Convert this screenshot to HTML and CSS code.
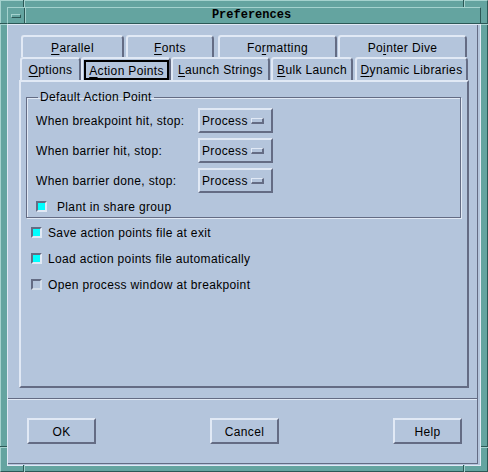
FILE: index.html
```html
<!DOCTYPE html>
<html>
<head>
<meta charset="utf-8">
<link rel="stylesheet" href="styles.css">
</head>
<body>
<div class="window">
  <span class="mark v tl"></span>
  <span class="mark v tr"></span>
  <span class="mark v bl"></span>
  <span class="mark v br"></span>
  <span class="mark h lt"></span>
  <span class="mark h rt"></span>
  <span class="mark h lb"></span>
  <span class="mark h rb"></span>
  <div class="titlebar">
    <div class="menubtn"><span class="menuicon"></span></div>
    <div class="title">Preferences</div>
  </div>
  <div class="client">
    <div class="dialog">
      <div class="notebook">
        <div class="tabrow back">
          <div class="tab t-parallel"><u>P</u>arallel</div>
          <div class="tab t-fonts"><u>F</u>onts</div>
          <div class="tab t-formatting">Fo<u>r</u>matting</div>
          <div class="tab t-pointer">Po<u>i</u>nter Dive</div>
        </div>
        <div class="tabrow front">
          <div class="tab t-options"><u>O</u>ptions</div>
          <div class="tab t-action sel"><div class="focus"><u>A</u>ction Points</div></div>
          <div class="tab t-launch"><u>L</u>aunch Strings</div>
          <div class="tab t-bulk"><u>B</u>ulk Launch</div>
          <div class="tab t-dynamic"><u>D</u>ynamic Libraries</div>
        </div>
        <div class="panel">
          <fieldset class="group">
            <legend>Default Action Point</legend>
            <div class="rows">
              <div class="row">
                <span class="label">When breakpoint hit, stop:</span>
                <div class="option"><span>Process</span><span class="indicator"></span></div>
              </div>
              <div class="row">
                <span class="label">When barrier hit, stop:</span>
                <div class="option"><span>Process</span><span class="indicator"></span></div>
              </div>
              <div class="row">
                <span class="label">When barrier done, stop:</span>
                <div class="option"><span>Process</span><span class="indicator"></span></div>
              </div>
            </div>
            <div class="check plant"><span class="box on"></span><span>Plant in share group</span></div>
          </fieldset>
          <div class="checks">
            <div class="check"><span class="box on"></span><span>Save action points file at exit</span></div>
            <div class="check"><span class="box on"></span><span>Load action points file automatically</span></div>
            <div class="check"><span class="box off"></span><span>Open process window at breakpoint</span></div>
          </div>
        </div>
      </div>
      <div class="sep"></div>
      <div class="buttons">
        <div class="btn">OK</div>
        <div class="btn">Cancel</div>
        <div class="btn">Help</div>
      </div>
    </div>
  </div>
</div>
</body>
</html>
```
FILE: styles.css
```css
* { box-sizing: border-box; }
html, body { margin: 0; padding: 0; }
body {
  width: 488px;
  height: 472px;
  background: #64a4a0;
  font-family: "Liberation Sans", Arial, sans-serif;
  font-size: 12px;
  letter-spacing: 0.35px;
  color: #000;
}
u { text-decoration: underline; text-underline-offset: 2px; text-decoration-thickness: 1px; }

.window {
  position: relative;
  width: 488px;
  height: 472px;
  background: #64a4a0;
  border-top: 1px solid #a4d2ce;
  border-left: 1px solid #a4d2ce;
  border-right: 1px solid #2c5856;
  border-bottom: 1px solid #2c5856;
  padding: 6px 6px 5px 6px;
  display: flex;
  flex-direction: column;
}

.mark { position: absolute; }
.mark.v { width: 2px; height: 7px; border-left: 1px solid #2c5856; border-right: 1px solid #a4d2ce; }
.mark.h { height: 2px; width: 7px; border-top: 1px solid #2c5856; border-bottom: 1px solid #a4d2ce; }
.mark.tl { left: 22px; top: -1px; }
.mark.tr { left: 462px; top: -1px; }
.mark.bl { left: 22px; bottom: -1px; }
.mark.br { left: 462px; bottom: -1px; }
.mark.lt { left: -1px; top: 22px; }
.mark.rt { right: -1px; top: 22px; }
.mark.lb { left: -1px; top: 445px; }
.mark.rb { right: -1px; top: 445px; }

.titlebar {
  height: 17px;
  display: flex;
  border-top: 1px solid #a4d2ce;
  border-left: 1px solid #a4d2ce;
  border-bottom: 1px solid #2c5856;
  border-right: 1px solid #2c5856;
}
.menubtn {
  width: 17px;
  display: flex;
  align-items: center;
  justify-content: center;
  border-right: 1px solid #2c5856;
  box-shadow: 1px 0 0 #a4d2ce;
}
.menuicon {
  width: 10px;
  height: 4px;
  border-top: 1px solid #a4d2ce;
  border-left: 1px solid #a4d2ce;
  border-bottom: 1px solid #2c5856;
  border-right: 1px solid #2c5856;
}
.title {
  flex: 1;
  text-align: center;
  font-family: "Liberation Mono", "Courier New", monospace;
  font-weight: bold;
  font-size: 12px;
  letter-spacing: 0;
  line-height: 15px;
  padding-right: 2px;
}

.client {
  flex: 1;
  background: #b4c5dc;
  border: 1px solid #e1e9f5;
  display: flex;
  flex-direction: column;
}
.dialog {
  flex: 1;
  margin: 0 2px 1px 0;
  border-right: 1px solid #646c84;
  border-bottom: 1px solid #646c84;
  display: flex;
  flex-direction: column;
}

.notebook {
  margin: 10px 0 0 11px;
  width: 450px;
}
.tabrow { display: flex; }
.tabrow.back { height: 22px; padding-left: 2px; }
.tabrow.front { height: 23px; padding-left: 1px; }
.tab {
  border-top: 2px solid #e1e9f5;
  border-left: 2px solid #e1e9f5;
  border-right: 2px solid #646c84;
  border-radius: 3px 4px 0 0;
  display: flex;
  align-items: center;
  justify-content: center;
  padding-top: 1px;
  white-space: nowrap;
}
.t-parallel { width: 103px; }
.t-fonts { width: 88px; margin-left: 2px; }
.t-formatting { width: 119px; margin-left: 4px; }
.t-pointer { width: 129px; margin-left: 1px; }
.t-options { width: 61px; }
.t-action { width: 90px; }
.t-launch { width: 99px; }
.t-bulk { width: 82px; margin-left: 1px; }
.t-dynamic { width: 113px; margin-left: 2px; }
.tab.sel {
  padding: 1px 0 0 1px;
  align-items: stretch;
}
.focus {
  flex: 1;
  border: 2px solid #000;
  display: flex;
  align-items: center;
  justify-content: center;
  padding-top: 1px;
}

.panel {
  height: 308px;
  border-top: 2px solid #e1e9f5;
  border-left: 2px solid #e1e9f5;
  border-right: 2px solid #646c84;
  border-bottom: 2px solid #646c84;
  padding: 8px 0 0 5px;
}

.group {
  margin: 0;
  width: 435px;
  border: 1px solid #646c84;
  box-shadow: inset 1px 1px 0 #e1e9f5, 1px 1px 0 #e1e9f5;
  padding: 4px 0 5px 9px;
}
.group legend {
  margin-left: 2px;
  padding: 0 2px;
  line-height: 14px;
}
.rows {
  display: flex;
  flex-direction: column;
  gap: 5px;
}
.row {
  display: flex;
  align-items: center;
  height: 25px;
}
.label { width: 162px; padding-top: 1px; }
.option {
  width: 75px;
  height: 25px;
  border-top: 2px solid #e1e9f5;
  border-left: 2px solid #e1e9f5;
  border-right: 2px solid #646c84;
  border-bottom: 2px solid #646c84;
  display: flex;
  align-items: center;
  justify-content: space-between;
  padding: 1px 7px 0 2px;
}
.indicator {
  width: 13px;
  height: 6px;
  border-top: 1px solid #e1e9f5;
  border-left: 1px solid #e1e9f5;
  border-right: 2px solid #646c84;
  border-bottom: 2px solid #646c84;
}

.check {
  display: flex;
  align-items: center;
  height: 11px;
  gap: 6px;
}
.check.plant { margin-top: 8px; gap: 10px; }
.box {
  width: 11px;
  height: 11px;
  border-top: 2px solid #646c84;
  border-left: 2px solid #646c84;
  border-right: 2px solid #e1e9f5;
  border-bottom: 2px solid #e1e9f5;
  flex: none;
}
.box.on { background: #00ffff; }
.box.off { background: #b4c5dc; border-right-color: #d4deea; border-bottom-color: #d4deea; }

.checks {
  margin: 9px 0 0 5px;
  display: flex;
  flex-direction: column;
  gap: 15px;
}

.sep {
  margin-top: 10px;
  height: 2px;
  border-top: 1px solid #646c84;
  border-bottom: 1px solid #e1e9f5;
}
.buttons {
  display: flex;
  justify-content: space-between;
  padding: 0 15px 0 19px;
  margin-top: 18px;
}
.btn {
  width: 69px;
  height: 26px;
  border-top: 2px solid #e1e9f5;
  border-left: 2px solid #e1e9f5;
  border-right: 2px solid #646c84;
  border-bottom: 2px solid #646c84;
  display: flex;
  align-items: center;
  justify-content: center;
  padding-top: 1px;
}
```
